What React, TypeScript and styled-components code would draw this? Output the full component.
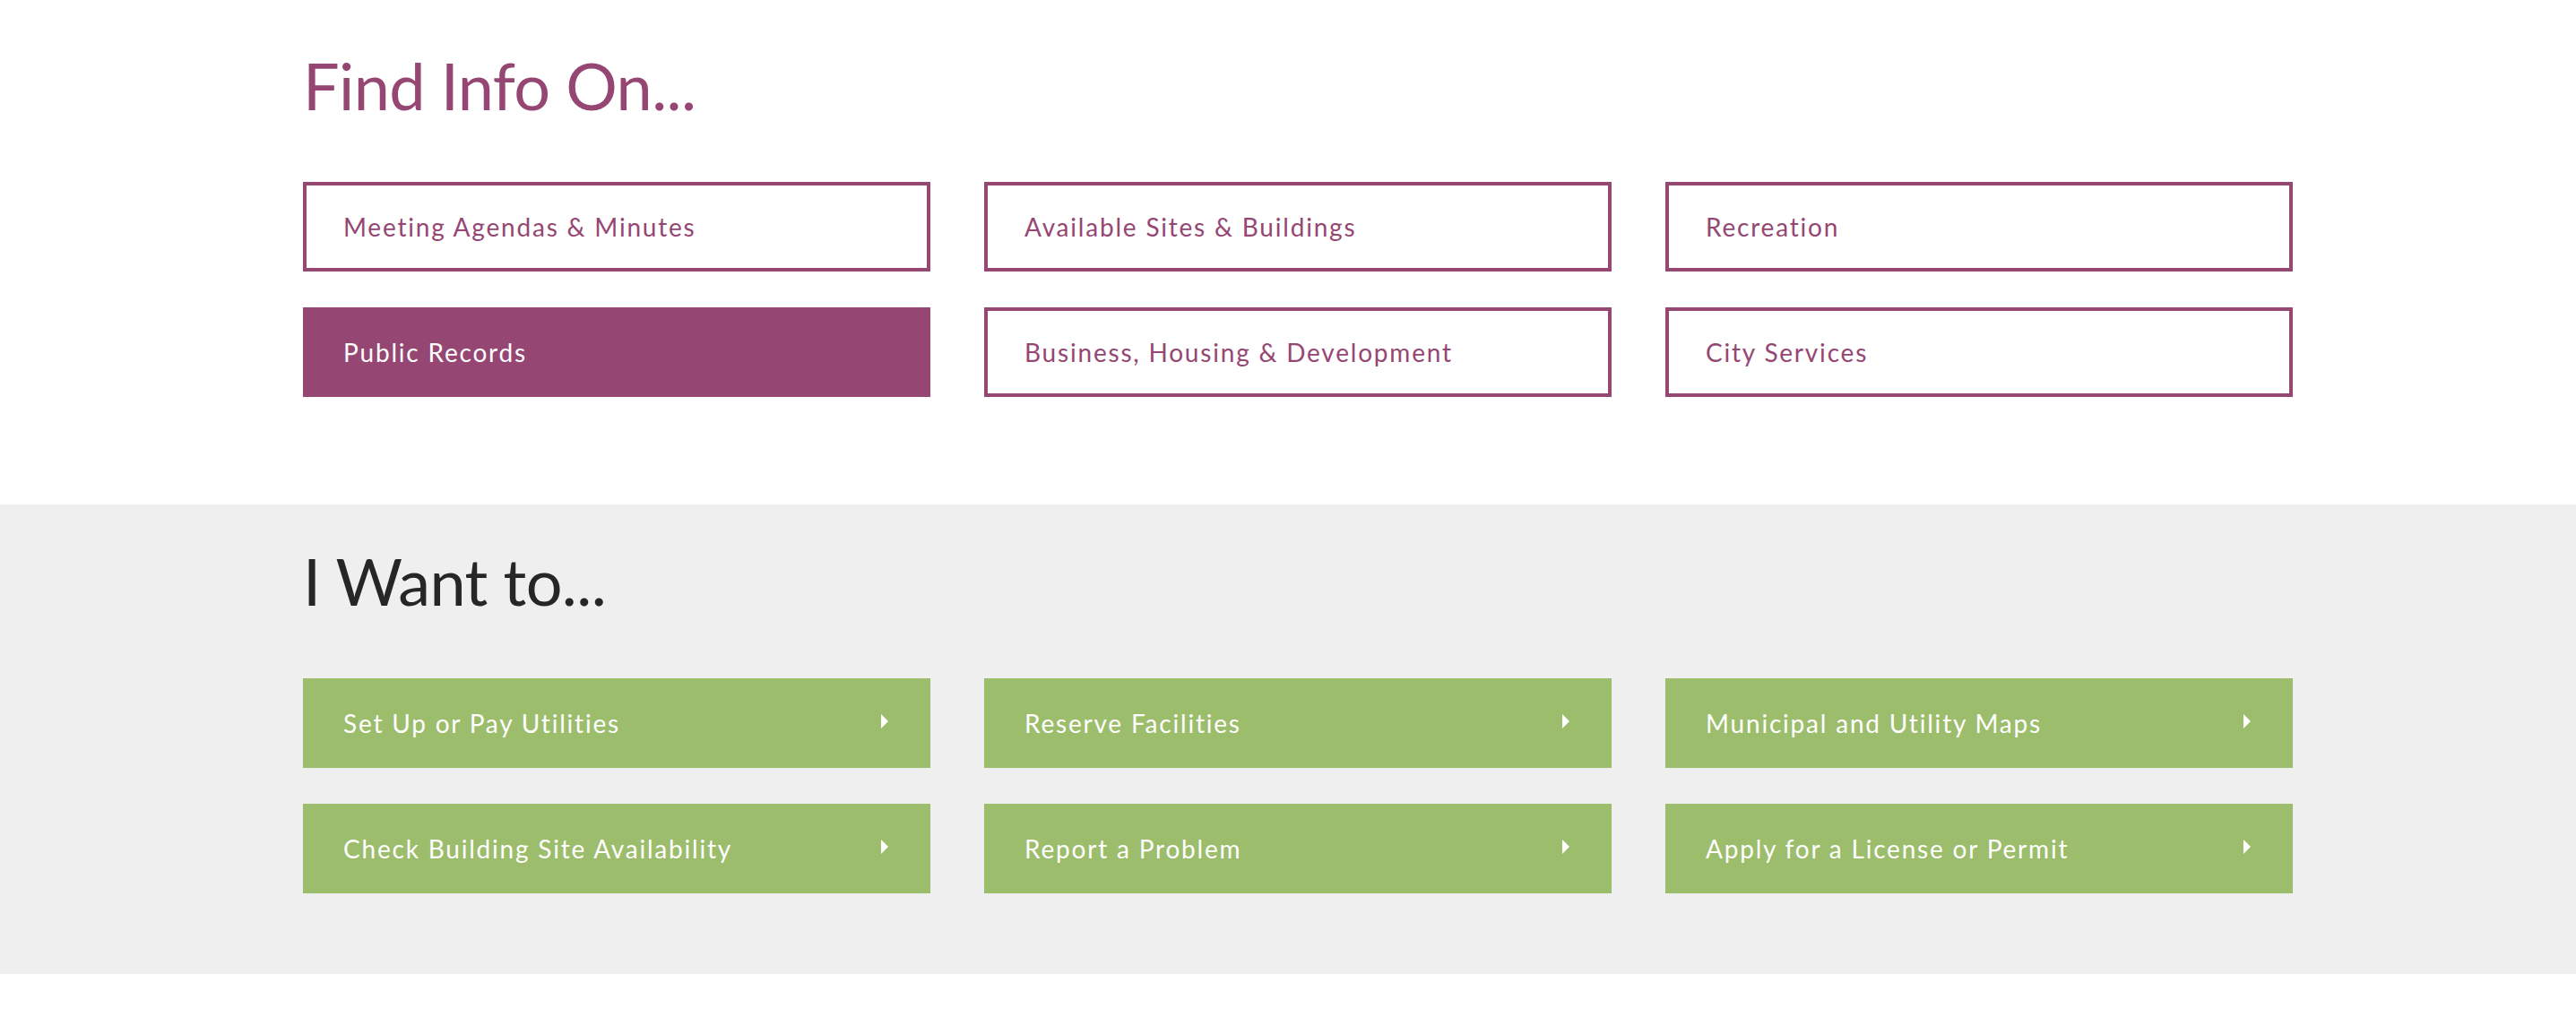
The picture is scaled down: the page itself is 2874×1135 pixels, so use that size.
import styled, { createGlobalStyle } from "styled-components";

const GlobalStyle = createGlobalStyle`
	body {
		margin: 0;
		background: #ffffff;
		font-family: Lato, "Open Sans", sans-serif;
	}
`;

const Section = styled.section<{ $shade?: boolean }>`
	background-color: ${({ $shade }) => ($shade ? "#efefef" : "#ffffff")};
	padding: ${({ $shade }) => ($shade ? "42px 0 90px" : "52px 0 120px")};
`;

const Container = styled.div`
	width: 2220px;
	margin-left: 338px;
`;

const Heading = styled.h2<{ $color: string }>`
	margin: 0 0 65px;
	font-family: Lato, sans-serif;
	font-weight: 400;
	font-size: 72px;
	line-height: 1.2;
	letter-spacing: -0.6px;
	color: ${({ $color }) => $color};
`;

const Grid = styled.div`
	display: grid;
	grid-template-columns: repeat(3, 700px);
	column-gap: 60px;
	row-gap: 40px;
`;

const InfoLink = styled.a<{ $active?: boolean }>`
	box-sizing: border-box;
	display: flex;
	align-items: center;
	height: 100px;
	padding: 0 41px;
	border: 4px solid #954672;
	background-color: ${({ $active }) => ($active ? "#954672" : "#ffffff")};
	color: ${({ $active }) => ($active ? "#ffffff" : "#954672")};
	font-family: Lato, sans-serif;
	font-size: 28px;
	letter-spacing: 1.8px;
	text-decoration: none;
`;

const ActionLink = styled.a`
	box-sizing: border-box;
	display: flex;
	align-items: center;
	justify-content: space-between;
	height: 100px;
	padding: 0 47px 0 45px;
	background-color: #9cbd6c;
	color: #ffffff;
	font-family: Lato, sans-serif;
	font-size: 28px;
	letter-spacing: 1.8px;
	text-decoration: none;
`;

const Caret = styled.svg`
	width: 8px;
	height: 16px;
	flex-shrink: 0;
	margin-top: -4px;
`;

const findInfo = [
	"Meeting Agendas & Minutes",
	"Available Sites & Buildings",
	"Recreation",
	"Public Records",
	"Business, Housing & Development",
	"City Services",
];

const wantTo = [
	"Set Up or Pay Utilities",
	"Reserve Facilities",
	"Municipal and Utility Maps",
	"Check Building Site Availability",
	"Report a Problem",
	"Apply for a License or Permit",
];

export default function App() {
	return (
		<>
			<GlobalStyle />
			<Section>
				<Container>
					<Heading $color="#954672">Find Info On...</Heading>
					<Grid>
						{findInfo.map((label) => (
							<InfoLink key={label} href="#" $active={label === "Public Records"}>
								{label}
							</InfoLink>
						))}
					</Grid>
				</Container>
			</Section>
			<Section $shade>
				<Container>
					<Heading $color="#262626">I Want to...</Heading>
					<Grid>
						{wantTo.map((label) => (
							<ActionLink key={label} href="#">
								<span>{label}</span>
								<Caret viewBox="0 0 8 16">
									<path d="M0 0 L8 8 L0 16 Z" fill="#ffffff" />
								</Caret>
							</ActionLink>
						))}
					</Grid>
				</Container>
			</Section>
		</>
	);
}
